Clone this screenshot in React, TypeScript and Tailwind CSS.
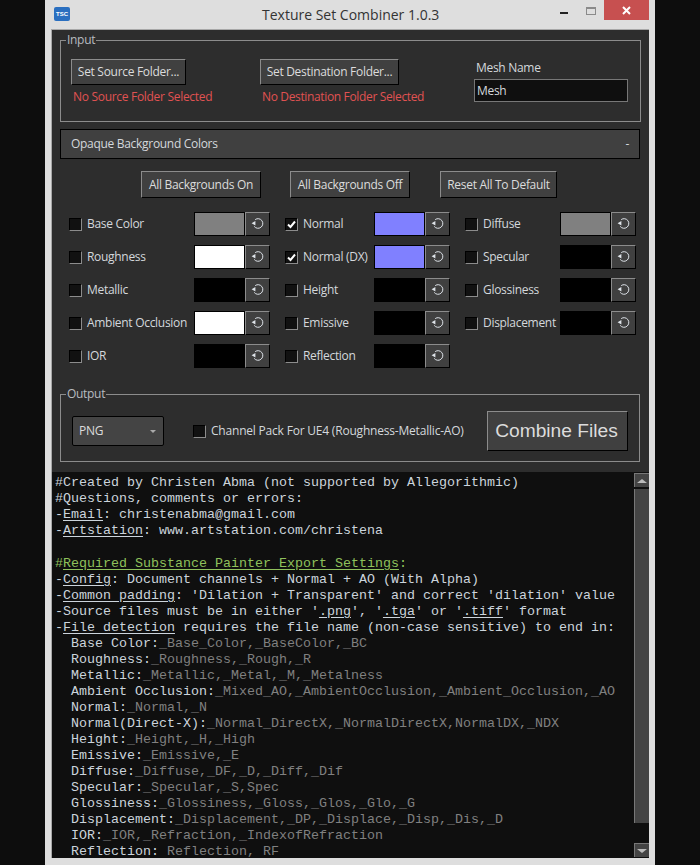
import type { ReactNode } from "react";

const bevel = "border border-t-[#8c8c8c] border-l-[#8c8c8c] border-r-black border-b-black bg-[#404040] text-[#dcdcdc]";

const rows: { label: string; color: string; on?: boolean }[] = [
  { label: "Base Color", color: "bg-[#808080]" },
  { label: "Normal", color: "bg-[#8080ff]", on: true },
  { label: "Diffuse", color: "bg-[#808080]" },
  { label: "Roughness", color: "bg-white" },
  { label: "Normal (DX)", color: "bg-[#8080ff]", on: true },
  { label: "Specular", color: "bg-black" },
  { label: "Metallic", color: "bg-black" },
  { label: "Height", color: "bg-black" },
  { label: "Glossiness", color: "bg-black" },
  { label: "Ambient Occlusion", color: "bg-white" },
  { label: "Emissive", color: "bg-black" },
  { label: "Displacement", color: "bg-black" },
  { label: "IOR", color: "bg-black" },
  { label: "Reflection", color: "bg-black" },
];

const fileNames = [
  ["Base Color:", "_Base_Color,_BaseColor,_BC"],
  ["Roughness:", "_Roughness,_Rough,_R"],
  ["Metallic:", "_Metallic,_Metal,_M,_Metalness"],
  ["Ambient Occlusion:", "_Mixed_AO,_AmbientOcclusion,_Ambient_Occlusion,_AO"],
  ["Normal:", "_Normal,_N"],
  ["Normal(Direct-X):", "_Normal_DirectX,_NormalDirectX,NormalDX,_NDX"],
  ["Height:", "_Height,_H,_High"],
  ["Emissive:", "_Emissive,_E"],
  ["Diffuse:", "_Diffuse,_DF,_D,_Diff,_Dif"],
  ["Specular:", "_Specular,_S,Spec"],
  ["Glossiness:", "_Glossiness,_Gloss,_Glos,_Glo,_G"],
  ["Displacement:", "_Displacement,_DP,_Displace,_Disp,_Dis,_D"],
  ["IOR:", "_IOR,_Refraction,_IndexofRefraction"],
  ["Reflection:", " Reflection, RF"],
];

function Check({ on }: { on?: boolean }) {
  return (
    <span className="flex h-[13px] w-[13px] shrink-0 items-center justify-center border border-t-black border-l-black border-r-[#8c8c8c] border-b-[#8c8c8c] bg-[#111]">
      {on && (
        <svg width="9" height="9" viewBox="0 0 9 9">
          <path d="M1 4.5 L3.5 7 L8 1.5" fill="none" stroke="#fff" strokeWidth="2" />
        </svg>
      )}
    </span>
  );
}

function ResetIcon() {
  return (
    <svg width="14" height="12" viewBox="0 0 14 12" fill="none">
      <path d="M4.2 1.6 A4.8 4.8 0 1 1 3.2 8.4" stroke="#dfe4ea" strokeWidth="1" />
      <path d="M0.6 5.2 L4.4 3 V7.4 Z" fill="#dfe4ea" />
    </svg>
  );
}

function Row({ label, color, on }: { label: string; color: string; on?: boolean }) {
  return (
    <div className="flex h-6 items-center">
      <Check on={on} />
      <span className="ml-[5px] flex-1 whitespace-nowrap">{label}</span>
      <span className={`h-6 w-[51px] border border-black ${color}`} />
      <button className={`flex h-6 w-[25px] items-center justify-center ${bevel}`}>
        <ResetIcon />
      </button>
    </div>
  );
}

function U({ children }: { children: ReactNode }) {
  return <span className="underline underline-offset-2">{children}</span>;
}

export default function App() {
  return (
    <div className="h-[865px] w-[700px] overflow-hidden bg-[#0d0d0d] font-['Open_Sans',sans-serif] text-xs tracking-[-0.3px] text-[#d4d8dc]">
      <div className="ml-[45px] flex h-full w-[610px] flex-col bg-[#dedede] pl-[6px] pr-[6px] pb-[7px]">
        {/* title bar */}
        <div className="-mx-[6px] flex h-[29px] shrink-0 items-start pl-[9px] pr-[6px]">
          <div className="mt-[7px] flex h-[14px] w-4 items-center justify-center rounded-[2px] bg-[#2a6fc0] font-['Liberation_Sans',sans-serif] text-[6px] font-bold tracking-normal text-white">
            TSC
          </div>
          <div className="ml-[192px] mt-[5px] font-['Open_Sans',sans-serif] text-sm tracking-normal text-[#333]">
            Texture Set Combiner 1.0.3
          </div>
          <div className="ml-auto flex">
            <span className="mr-[18px] mt-[12px] h-[2px] w-2 bg-[#222]" />
            <span className="mr-2 mt-[7px] h-2 w-[10px] border border-t-2 border-[#8a8a8a]" />
            <span className="flex h-5 w-[45px] items-center justify-center bg-[#c75050]">
              <svg width="9" height="9" viewBox="0 0 9 9">
                <path d="M1 1 L8 8 M8 1 L1 8" stroke="#fff" strokeWidth="2" />
              </svg>
            </span>
          </div>
        </div>

        {/* body */}
        <div className="flex min-h-0 flex-1 flex-col border-t border-l border-[#a8a8a8] bg-[#2d2d2d]">
          <div className="px-2 pt-[3px]">
            <fieldset className="h-[89px] border border-[#8c8c8c] pl-[10px] pr-[10px]">
              <legend className="-ml-[5px] px-px leading-[14px] text-[#b8bcc0]">Input</legend>
              <div className="flex pt-[12px]">
                <div className="w-[189px]">
                  <button className={`h-[26px] w-[115px] ${bevel}`}>Set Source Folder...</button>
                  <div className="ml-[2px] mt-[4px] text-[#e05252]">No Source Folder Selected</div>
                </div>
                <div className="w-[214px]">
                  <button className={`h-[26px] w-[139px] ${bevel}`}>Set Destination Folder...</button>
                  <div className="ml-[2px] mt-[4px] tracking-[-0.35px] text-[#e05252]">No Destination Folder Selected</div>
                </div>
                <div className="w-[154px]">
                  <div className="ml-[2px] mt-px">Mesh Name</div>
                  <div className="mt-[3px] flex h-[23px] items-center border border-[#777] bg-[#0f0f0f] pl-[2px]">Mesh</div>
                </div>
              </div>
            </fieldset>

            <div className="mt-[7px] flex h-[30px] w-[580px] items-center justify-between border border-black bg-[#404040] pl-[10px] pr-[10px] text-[#d4d8dc]">
              <span>Opaque Background Colors</span>
              <span>-</span>
            </div>

            <div className="relative mt-[12px] flex h-[27px] pl-[81px]">
              <button className={`w-[120px] ${bevel}`}>All Backgrounds On</button>
              <button className={`ml-[29px] w-[120px] ${bevel}`}>All Backgrounds Off</button>
              <button className={`ml-[30px] w-[117px] ${bevel}`}>Reset All To Default</button>
            </div>

            <div className="mt-[14px] grid grid-cols-[201px_165px_171px] gap-x-[15px] gap-y-[9px] pl-[9px]">
              {rows.map((r) => (
                <Row key={r.label} {...r} />
              ))}
            </div>

            <fieldset className="mt-[19px] h-[75px] w-[580px] border border-[#8c8c8c] pl-[11px] pr-[11px]">
              <legend className="-ml-[6px] px-px leading-[14px] text-[#b8bcc0]">Output</legend>
              <div className="flex items-center pt-[10px]">
                <div className="flex h-[30px] w-[92px] items-center justify-between rounded-[2px] border border-black bg-[#444] pl-[6px] pr-[7px] text-[#dcdcdc]">
                  <span>PNG</span>
                  <span className="h-0 w-0 border-x-[3px] border-t-[3px] border-x-transparent border-t-[#aaa]" />
                </div>
                <div className="ml-[29px] flex items-center">
                  <Check />
                  <span className="ml-[5px] tracking-[-0.2px]">Channel Pack For UE4 (Roughness-Metallic-AO)</span>
                </div>
                <button className={`ml-auto h-[40px] w-[141px] pr-[2px] font-['Liberation_Sans',sans-serif] text-[19.2px] tracking-normal ${bevel}`}>
                  Combine Files
                </button>
              </div>
            </fieldset>
          </div>

          {/* console */}
          <div className="mt-[10px] flex min-h-0 flex-1 bg-[#0f0f0f] tracking-normal">
            <div className="min-w-0 flex-1 overflow-hidden whitespace-pre pl-[3px] pt-[3px] font-['Liberation_Mono',monospace] text-[13.33px] leading-4 text-[#ccd4dc]">
              <div>#Created by Christen Abma (not supported by Allegorithmic)</div>
              <div>#Questions, comments or errors:</div>
              <div>-<U>Email</U>: christenabma@gmail.com</div>
              <div>-<U>Artstation</U>: www.artstation.com/christena</div>
              <div className="h-[17px]" />
              <div className="text-[#8fc15c]">#<U>Required Substance Painter Export Settings</U>:</div>
              <div>-<U>Config</U>: Document channels + Normal + AO (With Alpha)</div>
              <div>-<U>Common padding</U>: 'Dilation + Transparent' and correct 'dilation' value</div>
              <div>-Source files must be in either '<U>.png</U>', '<U>.tga</U>' or '<U>.tiff</U>' format</div>
              <div>-<U>File detection</U> requires the file name (non-case sensitive) to end in:</div>
              {fileNames.map(([k, v]) => (
                <div key={k} className="pl-4">
                  {k}
                  <span className="text-[#808080]">{v}</span>
                </div>
              ))}
            </div>
            <div className="flex w-[15px] shrink-0 flex-col pt-px pb-px">
              <div className="flex h-[14px] items-center justify-center border-t border-l border-[#777] bg-[#444]">
                <span className="h-0 w-0 border-x-[5px] border-b-[4px] border-x-transparent border-b-[#bbb]" />
              </div>
              <div className="mt-[2px] h-[334px] border-l border-[#777] bg-[#444]" />
              <div className="mt-auto flex h-[14px] items-center justify-center border-t border-l border-[#777] bg-[#444]">
                <span className="h-0 w-0 border-x-[5px] border-t-[4px] border-x-transparent border-t-[#bbb]" />
              </div>
            </div>
          </div>
        </div>
      </div>
    </div>
  );
}
